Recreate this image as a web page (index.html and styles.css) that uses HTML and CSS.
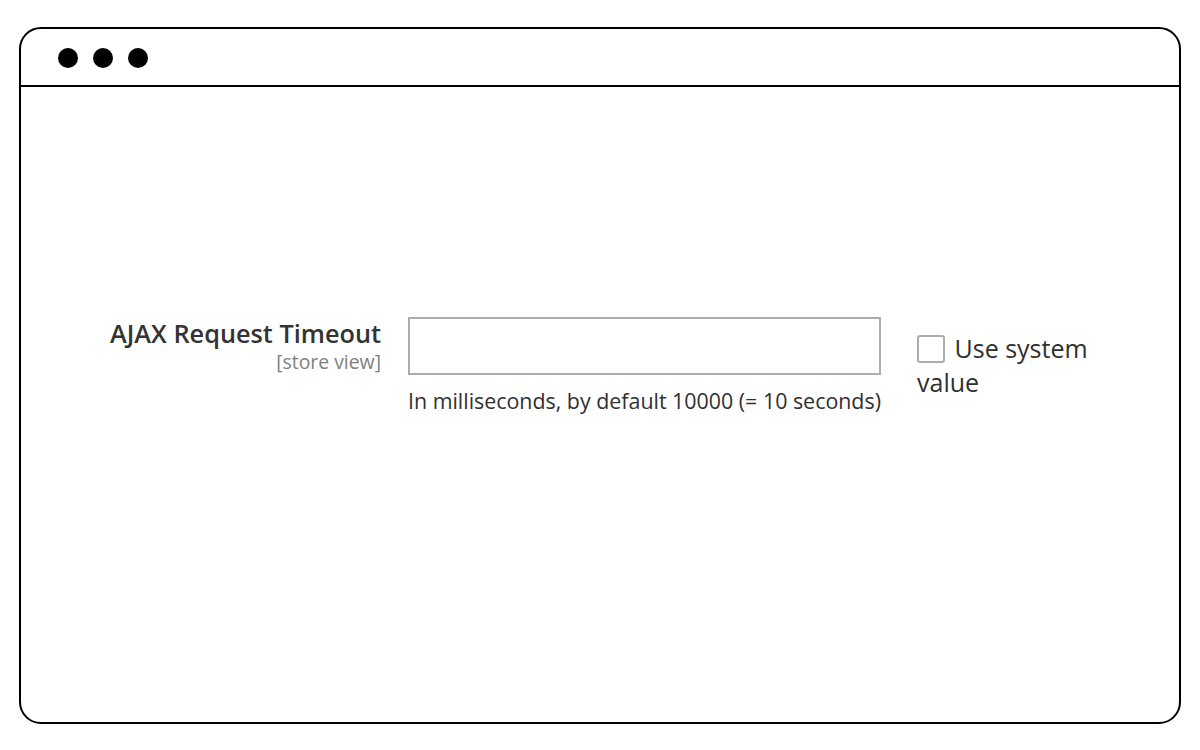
FILE: index.html
```html
<!DOCTYPE html>
<html>
<head>
<meta charset="utf-8">
<link rel="stylesheet" href="styles.css">
</head>
<body>
<div class="window">
  <div class="titlebar">
    <span class="dot"></span><span class="dot"></span><span class="dot"></span>
  </div>
  <div class="content">
    <div class="field">
      <div class="label">
        <div class="label-title">AJAX Request Timeout</div>
        <div class="label-scope">[store view]</div>
      </div>
      <div class="control">
        <div class="input"></div>
        <div class="note">In milliseconds, by default 10000 (= 10 seconds)</div>
      </div>
      <div class="system">
        <span class="checkbox"></span> Use system value
      </div>
    </div>
  </div>
</div>
</body>
</html>
```
FILE: styles.css
```css
html, body {
  margin: 0;
  padding: 0;
  background: #fff;
}
body {
  font-family: "Open Sans", "Noto Sans", sans-serif;
  color: #303030;
}
.window {
  box-sizing: border-box;
  margin: 27px 0 0 19px;
  width: 1162px;
  height: 697px;
  border: 2px solid #000;
  border-radius: 22px;
  display: flex;
  flex-direction: column;
}
.titlebar {
  height: 58px;
  border-bottom: 2px solid #000;
  display: flex;
  align-items: center;
  gap: 15px;
  padding: 2px 0 0 37px;
  box-sizing: border-box;
  flex: none;
}
.dot {
  width: 20px;
  height: 20px;
  border-radius: 50%;
  background: #000;
}
.content {
  flex: 1;
  padding-top: 230px;
}
.field {
  display: flex;
  align-items: flex-start;
}
.label {
  width: 360px;
  text-align: right;
  flex: none;
}
.label-title {
  font-size: 25.3px;
  font-weight: 600;
  line-height: 32px;
  color: #333;
}
.label-scope {
  margin-top: 2px;
  font-size: 19.4px;
  line-height: 22px;
  color: #808080;
}
.control {
  margin-left: 27px;
  width: 473px;
  flex: none;
}
.input {
  box-sizing: border-box;
  height: 58px;
  border: 2px solid #adadad;
  background: #fff;
}
.note {
  margin-top: 12px;
  font-size: 21.4px;
  line-height: 28px;
  color: #303030;
}
.system {
  margin-left: 36px;
  width: 200px;
  padding-top: 14px;
  font-size: 25px;
  line-height: 34px;
  color: #303030;
}
.checkbox {
  display: inline-block;
  box-sizing: border-box;
  width: 28px;
  height: 28px;
  border: 2px solid #adadad;
  border-radius: 3px;
  vertical-align: -5px;
  margin-right: 3px;
}
```
